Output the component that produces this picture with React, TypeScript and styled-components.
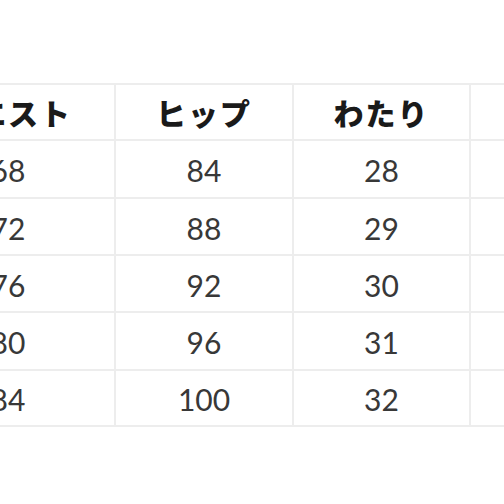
import styled, { createGlobalStyle } from 'styled-components';

const GlobalStyle = createGlobalStyle`
  html, body {
    margin: 0;
    padding: 0;
    background: #ffffff;
    overflow: hidden;
  }
`;

// 画面全体
const Page = styled.div`
  width: 504px;
  height: 504px;
  overflow: hidden;
  background: #ffffff;
  padding-top: 83px;
  box-sizing: border-box;
`;

// サイズ表
const Table = styled.div`
  display: grid;
  grid-template-columns: 214px 178px 177px 178px;
  margin-left: -98px;
  width: max-content;
  border-top: 2px solid #ededed;
`;

const Cell = styled.div<{ $header?: boolean; $height: number }>`
  height: ${p => p.$height}px;
  box-sizing: border-box;
  border-right: 2px solid #ededed;
  border-bottom: 2px solid #ededed;
  display: flex;
  align-items: center;
  justify-content: center;
  color: ${p => (p.$header ? '#1a1a1a' : '#383838')};
  font-family: ${p =>
    p.$header
      ? '"Noto Sans CJK JP", "Noto Sans", sans-serif'
      : '"Lato", "Noto Sans", sans-serif'};
  font-weight: ${p => (p.$header ? 900 : 400)};
  font-size: 30px;
  letter-spacing: ${p => (p.$header ? '2px' : '0')};
  padding-top: ${p => (p.$header ? '0' : '2px')};
`;

const headers = ['ウエスト', 'ヒップ', 'わたり', ''];
const rows = [
  ['68', '84', '28', ''],
  ['72', '88', '29', ''],
  ['76', '92', '30', ''],
  ['80', '96', '31', ''],
  ['84', '100', '32', ''],
];
const rowHeights = [58, 57, 57, 58, 56];

export default function App() {
  return (
    <>
      <GlobalStyle />
      <Page>
        <Table>
          {headers.map((h, i) => (
            <Cell key={`h${i}`} $header $height={56}>
              {h}
            </Cell>
          ))}
          {rows.map((row, r) =>
            row.map((v, c) => (
              <Cell key={`${r}-${c}`} $height={rowHeights[r]}>
                {v}
              </Cell>
            ))
          )}
        </Table>
      </Page>
    </>
  );
}
